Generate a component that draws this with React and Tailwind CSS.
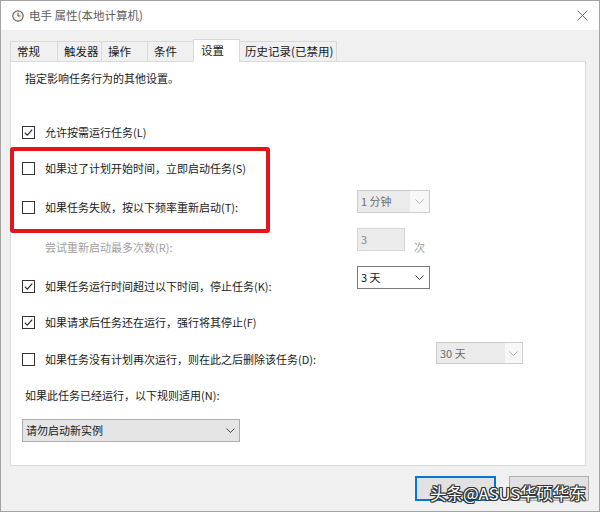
import React from 'react';

const font = { fontFamily: '"Microsoft YaHei", "Noto Sans CJK SC", "Noto Sans", sans-serif' };

function Chevron({ disabled }) {
  return (
    <svg width="9" height="5" viewBox="0 0 9 5" className="shrink-0">
      <polyline points="0.5,0.5 4.5,4.5 8.5,0.5" fill="none" stroke={disabled ? '#b5b5b5' : '#444'} strokeWidth="1" />
    </svg>
  );
}

function Box({ checked }) {
  return (
    <span className="w-[13px] h-[13px] border border-[#333] bg-white flex items-center justify-center shrink-0">
      {checked && (
        <svg width="11" height="11" viewBox="0 0 11 11">
          <path d="M1.8 5.6 L4.3 8.1 L9.2 2.6" fill="none" stroke="#222" strokeWidth="1.1" />
        </svg>
      )}
    </span>
  );
}

function Check({ checked, children, className = '' }) {
  return (
    <div className={`flex items-center h-[20px] ml-[11px] gap-[10px] text-[#1a1a1a] ${className}`}>
      <Box checked={checked} />
      <span className="whitespace-nowrap">{children}</span>
    </div>
  );
}

function DisabledCombo({ label, w, h, gray }) {
  return (
    <div className={`${w} ${h} border border-[#cccccc] bg-[#f7f7f7] flex items-stretch shrink-0`}>
      <div className={`${gray} bg-[#ebebeb] flex items-center pl-[3px] text-[#6d6d6d] whitespace-nowrap`}>{label}</div>
      <div className="flex-1 flex items-center justify-center">
        <Chevron disabled />
      </div>
    </div>
  );
}

function Tab({ label, w, selected }) {
  if (selected) {
    return (
      <div className={`${w} h-[23px] -mb-[1px] relative z-10 bg-white border border-b-0 border-[#d9d9d9] pl-[7px] flex items-center text-[#1a1a1a]`}>
        {label}
      </div>
    );
  }
  return (
    <div className={`${w} h-[20px] bg-[#f0f0f0] border-t border-l border-[#d9d9d9] pl-[6px] flex items-center text-[#1a1a1a] whitespace-nowrap`}>
      {label}
    </div>
  );
}

export default function App() {
  return (
    <div style={font} className="relative w-[600px] h-[512px] bg-[#f0f0f0] border border-[#a3a3a3] flex flex-col text-[11px] overflow-hidden">
      {/* title bar */}
      <div className="h-[29px] bg-white flex items-center shrink-0">
        <svg width="12" height="12" viewBox="0 0 12 12" className="ml-[11px]">
          <circle cx="6" cy="6" r="5.2" fill="#f4f1e6" stroke="#6a6a6a" strokeWidth="1.2" />
          <path d="M6 2.8 V6 H8.4" fill="none" stroke="#555" strokeWidth="1" />
        </svg>
        <span className="ml-[5px] text-[#5c5c5c] text-[11.5px]">电手 属性(本地计算机)</span>
        <div className="flex-1" />
        <svg width="11" height="11" viewBox="0 0 11 11" className="mr-[11px]">
          <path d="M0.5 0.5 L10.5 10.5 M10.5 0.5 L0.5 10.5" stroke="#6d6d6d" strokeWidth="1" />
        </svg>
      </div>

      {/* tabs */}
      <div className="mt-[9px] ml-[9px] h-[22px] flex items-end text-[11.5px]">
        <Tab label="常规" w="w-[47px]" />
        <Tab label="触发器" w="w-[44px]" />
        <Tab label="操作" w="w-[46px]" />
        <Tab label="条件" w="w-[46px]" />
        <Tab label="设置" w="w-[47px]" selected />
        <div className="w-[97px] h-[20px] bg-[#f0f0f0] border-t border-r border-[#d9d9d9] pl-[5px] flex items-center text-[#1a1a1a] whitespace-nowrap">
          历史记录(已禁用)
        </div>
      </div>

      {/* panel */}
      <div className="relative ml-[9px] w-[576px] h-[405px] bg-white border border-[#dadada] flex flex-col shrink-0">
        <div className="mt-[7px] h-[18px] pl-[14px] flex items-center text-[#1a1a1a]">指定影响任务行为的其他设置。</div>

        <Check checked className="mt-[35px]">允许按需运行任务(L)</Check>
        <Check className="mt-[16px]">如果过了计划开始时间，立即启动任务(S)</Check>

        <div className="mt-[12px] h-[27px] flex items-start">
          <div className="w-[346px] mt-[7px]">
            <Check>如果任务失败，按以下频率重新启动(T):</Check>
          </div>
          <DisabledCombo label="1 分钟" w="w-[73px]" h="h-[23px]" gray="w-[52px]" />
        </div>

        <div className="mt-[11px] h-[29px] flex items-start">
          <div className="w-[346px] mt-[9px] h-[20px] pl-[34px] flex items-center text-[#a0a0a0]">尝试重新启动最多次数(R):</div>
          <div className="w-[48px] h-[23px] border border-[#d6d6d6] bg-[#ececec] flex items-center pl-[3px] text-[#8a8a8a]">3</div>
          <div className="ml-[9px] mt-[9px] h-[20px] flex items-center text-[#a0a0a0]">次</div>
        </div>

        <div className="mt-[9px] h-[29px] flex items-start">
          <div className="w-[346px] mt-[10px]">
            <Check checked>如果任务运行时间超过以下时间，停止任务(K):</Check>
          </div>
          <div className="w-[73px] h-[23px] border border-[#7a7a7a] bg-white flex items-center justify-between pl-[3px] pr-[5px] text-[#1a1a1a]">
            <span>3 天</span>
            <Chevron />
          </div>
        </div>

        <Check checked className="mt-[17px]">如果请求后任务还在运行，强行将其停止(F)</Check>

        <div className="mt-[10px] h-[27px] flex items-start">
          <div className="w-[425px] mt-[7px]">
            <Check>如果任务没有计划再次运行，则在此之后删除该任务(D):</Check>
          </div>
          <DisabledCombo label="30 天" w="w-[87px]" h="h-[22px]" gray="w-[68px]" />
        </div>

        <div className="mt-[17px] h-[18px] pl-[14px] flex items-center text-[#1a1a1a]">如果此任务已经运行，以下规则适用(N):</div>

        <div className="mt-[15px] ml-[11px] w-[218px] h-[23px] border border-[#adadad] bg-[#e5e5e5] flex items-center justify-between pl-[3px] pr-[4px] text-[#1a1a1a]">
          <span>请勿启动新实例</span>
          <Chevron />
        </div>

        {/* red highlight */}
        <div className="absolute left-[-1px] top-[85px] w-[260px] h-[86px] border-[4px] border-[#e3141b] rounded-[3px] pointer-events-none" />
      </div>

      {/* buttons */}
      <div className="mt-[10px] flex justify-end gap-[13px] pr-[10px]">
        <div className="w-[81px] h-[25px] bg-[#e1e1e1] border-2 border-[#0078d7]" />
        <div className="w-[80px] h-[25px] bg-[#e1e1e1] border border-[#adadad]" />
      </div>

      {/* watermark */}
      <div className="absolute left-[429px] top-[481px] text-[16.5px] leading-[22px] text-white whitespace-nowrap [text-shadow:1px_0_0_#333,-1px_0_0_#333,0_1px_0_#333,0_-1px_0_#333,1px_1px_0_#333,-1px_-1px_0_#333,1px_-1px_0_#333,-1px_1px_0_#333]">
        头条@ASUS华硕华东
      </div>
    </div>
  );
}
